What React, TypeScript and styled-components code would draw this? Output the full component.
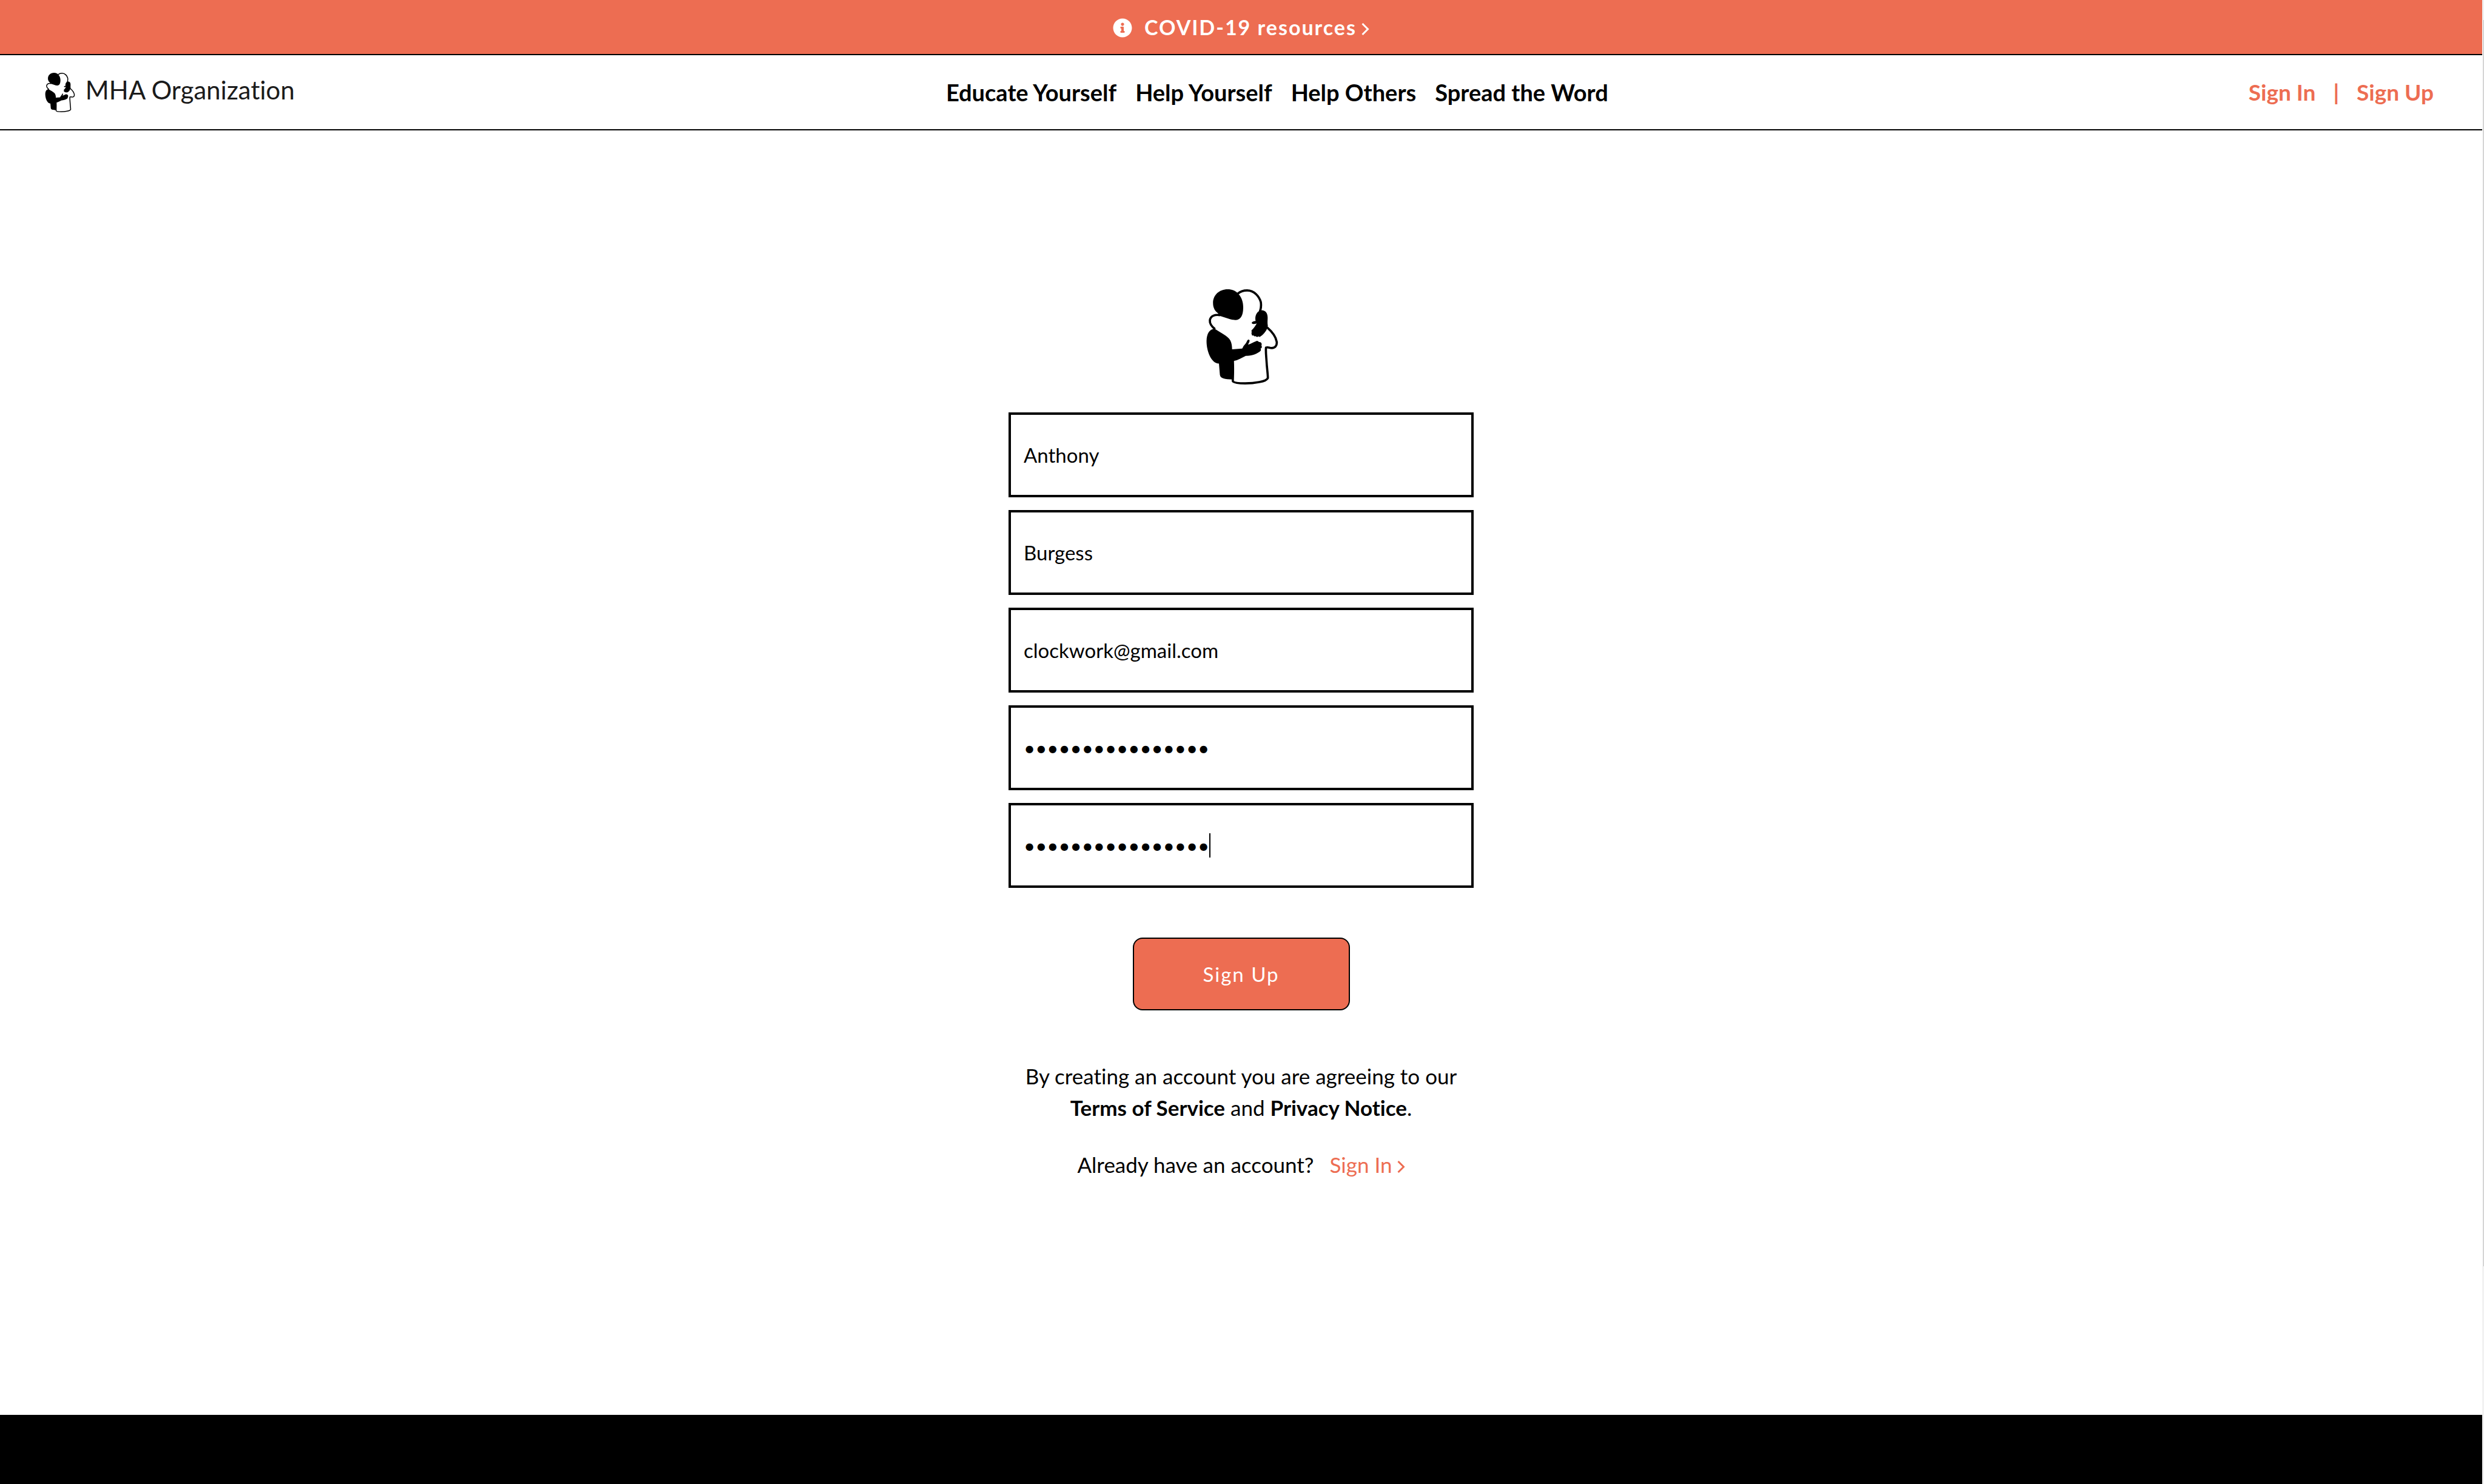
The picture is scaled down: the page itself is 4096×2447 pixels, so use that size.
import React, { useState } from 'react';
import styled, { createGlobalStyle } from 'styled-components';
import { FaInfoCircle } from 'react-icons/fa';

const orange = '#ed6d52';

const GlobalStyle = createGlobalStyle`
  *, *::before, *::after { box-sizing: border-box; }
  body {
    margin: 0;
    background: #fff;
    color: #000;
    font-family: Lato, "Open Sans", sans-serif;
    font-size: 35px;
    line-height: 52px;
    font-variant-ligatures: none;
  }
  a { color: inherit; text-decoration: none; }
`;

const Shell = styled.div`
  display: flex;
  min-height: 100vh;
`;

const Page = styled.div`
  flex: 1;
  min-width: 0;
  display: flex;
  flex-direction: column;
`;

const ScrollTrack = styled.div`
  width: 3px;
  padding: 33px 0 0 2px;
  background: #f1f1f1;
`;

const ScrollThumb = styled.div`
  height: 84vh;
  background: #c1c1c1;
`;

const Banner = styled.div`
  display: flex;
  justify-content: center;
  align-items: center;
  height: 91px;
  border-bottom: 2px solid #000;
  background: ${orange};
  color: #fff;
`;

const BannerLink = styled.a`
  font-size: 34px;
  font-weight: 700;
  letter-spacing: 2px;
`;

const InfoIcon = styled(FaInfoCircle)`
  width: 32px;
  height: 32px;
  margin-right: 20px;
  vertical-align: -4px;
`;

const ChevronSvg = styled.svg`
  width: 13px;
  height: 20px;
  margin-left: 8px;
  vertical-align: baseline;
`;

const Header = styled.header`
  display: flex;
  justify-content: space-between;
  align-items: center;
  height: 124px;
  padding: 0 80px 0 74px;
  border-bottom: 2px solid #000;
`;

const Brand = styled.a`
  display: flex;
  align-items: flex-start;
  gap: 18px;
  padding-right: 18px;
  color: #1b1b1b;
  font-size: 42px;
  line-height: 56px;
`;

const LogoSvg = styled.svg<{ $height: number }>`
  display: block;
  height: ${p => p.$height}px;
  overflow: visible;
  color: #000;
`;

const Nav = styled.nav`
  display: flex;
  gap: 31px;
  font-size: 38px;
  font-weight: 700;
`;

const AccountNav = styled(Nav)`
  gap: 29px;
  color: ${orange};
  font-size: 37px;
`;

const Main = styled.main`
  flex: 1;
  display: flex;
  flex-direction: column;
  align-items: center;
  padding: 262px 32px 128px;
`;

const Form = styled.form`
  display: flex;
  flex-direction: column;
  align-items: center;
  width: 767px;
  max-width: 100%;
  margin: 46px 0 82px;
`;

const Fields = styled.div`
  display: flex;
  flex-direction: column;
  gap: 21px;
  width: 100%;
  margin-bottom: 82px;
`;

const Field = styled.div`
  position: relative;
  display: flex;
`;

const Input = styled.input`
  width: 100%;
  height: 140px;
  padding: 0 21px;
  border: 4px solid #000;
  border-radius: 0;
  outline: none;
  background: #fff;
  color: #000;
  font: inherit;
  font-size: 33px;
`;

const Caret = styled.span`
  position: absolute;
  top: 50px;
  left: 331px;
  width: 2px;
  height: 40px;
  background: #000;
`;

const SubmitButton = styled.button`
  width: 358px;
  height: 120px;
  padding: 0;
  border: 2px solid #000;
  border-radius: 16px;
  background: ${orange};
  color: #fff;
  font: inherit;
  font-size: 33px;
  letter-spacing: 2px;
`;

const Terms = styled.p`
  margin: 0 0 42px;
  text-align: center;
  a { font-weight: 700; }
`;

const SignInPrompt = styled.p`
  display: flex;
  gap: 26px;
  margin: 0;
  a { color: ${orange}; }
`;

const Footer = styled.footer`
  height: 114px;
  background: #000;
`;

function Chevron() {
  return (
    <ChevronSvg viewBox="0 0 13 20" fill="none" stroke="currentColor" strokeWidth="3" aria-hidden="true">
      <path d="M1.5 1 L10.5 10 L1.5 19" />
    </ChevronSvg>
  );
}

/* Two people in an embrace: one filled, one outlined. */
function Logo({ height }: { height: number }) {
  return (
    <LogoSvg $height={height} viewBox="111 91 386 514" role="img" aria-label="MHA Organization">
      <g fill="#fff" stroke="currentColor" strokeWidth="12" strokeLinejoin="round">
        <path d="M285 114 C300 101 318 97 335 97 C375 97 401 132 409 160 C412 180 410 195 404 210" />
        <path d="M190 231 C165 226 138 232 134 258 C132 280 146 294 162 306" />
        <path d="M443 297 C465 316 490 346 495 375 C497 395 486 408 468 408 C455 408 448 401 437 406 C435 430 438 450 440 480 C442 520 447 545 447 570 C440 590 370 599 325 599 C290 599 262 596 258 587 C257 575 261 540 258 476" />
      </g>
      <g fill="currentColor">
        <path d="M230 91 C258 91 278 102 290 118 C307 138 314 162 314 188 C314 228 303 256 274 257 C248 257 212 240 182 233 L178 220 C160 208 151 190 151 165 C151 122 185 91 230 91 Z" />
        <path d="M160 304 C132 306 117 330 116 370 C116 425 141 491 183 492 L188 552 C190 573 215 577 256 578 L262 478 C285 474 307 460 328 450 C360 452 393 437 407 424 C411 419 410 414 407 411 C416 409 416 399 412 395 C417 386 411 376 402 376 C398 377 396 370 389 369 C378 372 355 385 340 390 C344 382 350 372 348 366 C345 361 339 362 336 368 C331 380 325 388 318 395 C312 401 313 408 308 411 L254 415 C254 388 248 370 238 358 C220 338 185 322 160 304 Z" />
        <path d="M410 204 C435 203 446 220 446 245 C446 260 444 270 447 288 C444 310 425 335 408 345 C405 350 400 349 397 345 C393 350 385 349 381 344 C376 346 371 345 371 340 C364 342 359 340 360 333 C357 328 358 325 361 323 C357 318 358 312 363 309 C372 300 382 285 387 275 C378 279 366 280 361 275 C358 268 366 264 381 262 C376 240 383 212 410 204 Z" />
      </g>
    </LogoSvg>
  );
}

const fields = [
  { name: 'firstName', label: 'First name', type: 'text', value: 'Anthony' },
  { name: 'lastName', label: 'Last name', type: 'text', value: 'Burgess' },
  { name: 'email', label: 'Email', type: 'email', value: 'clockwork@gmail.com' },
  { name: 'password', label: 'Password', type: 'password', value: 'aclockworkorange' },
  { name: 'confirm', label: 'Confirm password', type: 'password', value: 'aclockworkorange' },
];

export default function App() {
  const [values, setValues] = useState<Record<string, string>>(
    Object.fromEntries(fields.map(f => [f.name, f.value]))
  );

  return (
    <>
      <GlobalStyle />
      <Shell>
        <Page>
          <Banner>
            <BannerLink href="#covid">
              <InfoIcon aria-hidden="true" />
              COVID-19 resources
              <Chevron />
            </BannerLink>
          </Banner>
          <Header>
            <Brand href="#home">
              <Logo height={65} />
              MHA Organization
            </Brand>
            <Nav>
              <a href="#educate">Educate Yourself</a>
              <a href="#help">Help Yourself</a>
              <a href="#others">Help Others</a>
              <a href="#spread">Spread the Word</a>
            </Nav>
            <AccountNav>
              <a href="#signin">Sign In</a>
              <span>|</span>
              <a href="#signup">Sign Up</a>
            </AccountNav>
          </Header>
          <Main>
            <Logo height={157} />
            <Form onSubmit={e => e.preventDefault()}>
              <Fields>
                {fields.map(f => (
                  <Field key={f.name}>
                    <Input
                      type={f.type}
                      name={f.name}
                      aria-label={f.label}
                      value={values[f.name]}
                      onChange={e => setValues({ ...values, [f.name]: e.target.value })}
                    />
                    {f.name === 'confirm' && <Caret />}
                  </Field>
                ))}
              </Fields>
              <SubmitButton type="submit">Sign Up</SubmitButton>
            </Form>
            <Terms>
              By creating an account you are agreeing to our
              <br />
              <a href="#terms">Terms of Service</a> and <a href="#privacy">Privacy Notice</a>.
            </Terms>
            <SignInPrompt>
              Already have an account?
              <a href="#signin">
                Sign In
                <Chevron />
              </a>
            </SignInPrompt>
          </Main>
          <Footer />
        </Page>
        <ScrollTrack>
          <ScrollThumb />
        </ScrollTrack>
      </Shell>
    </>
  );
}
